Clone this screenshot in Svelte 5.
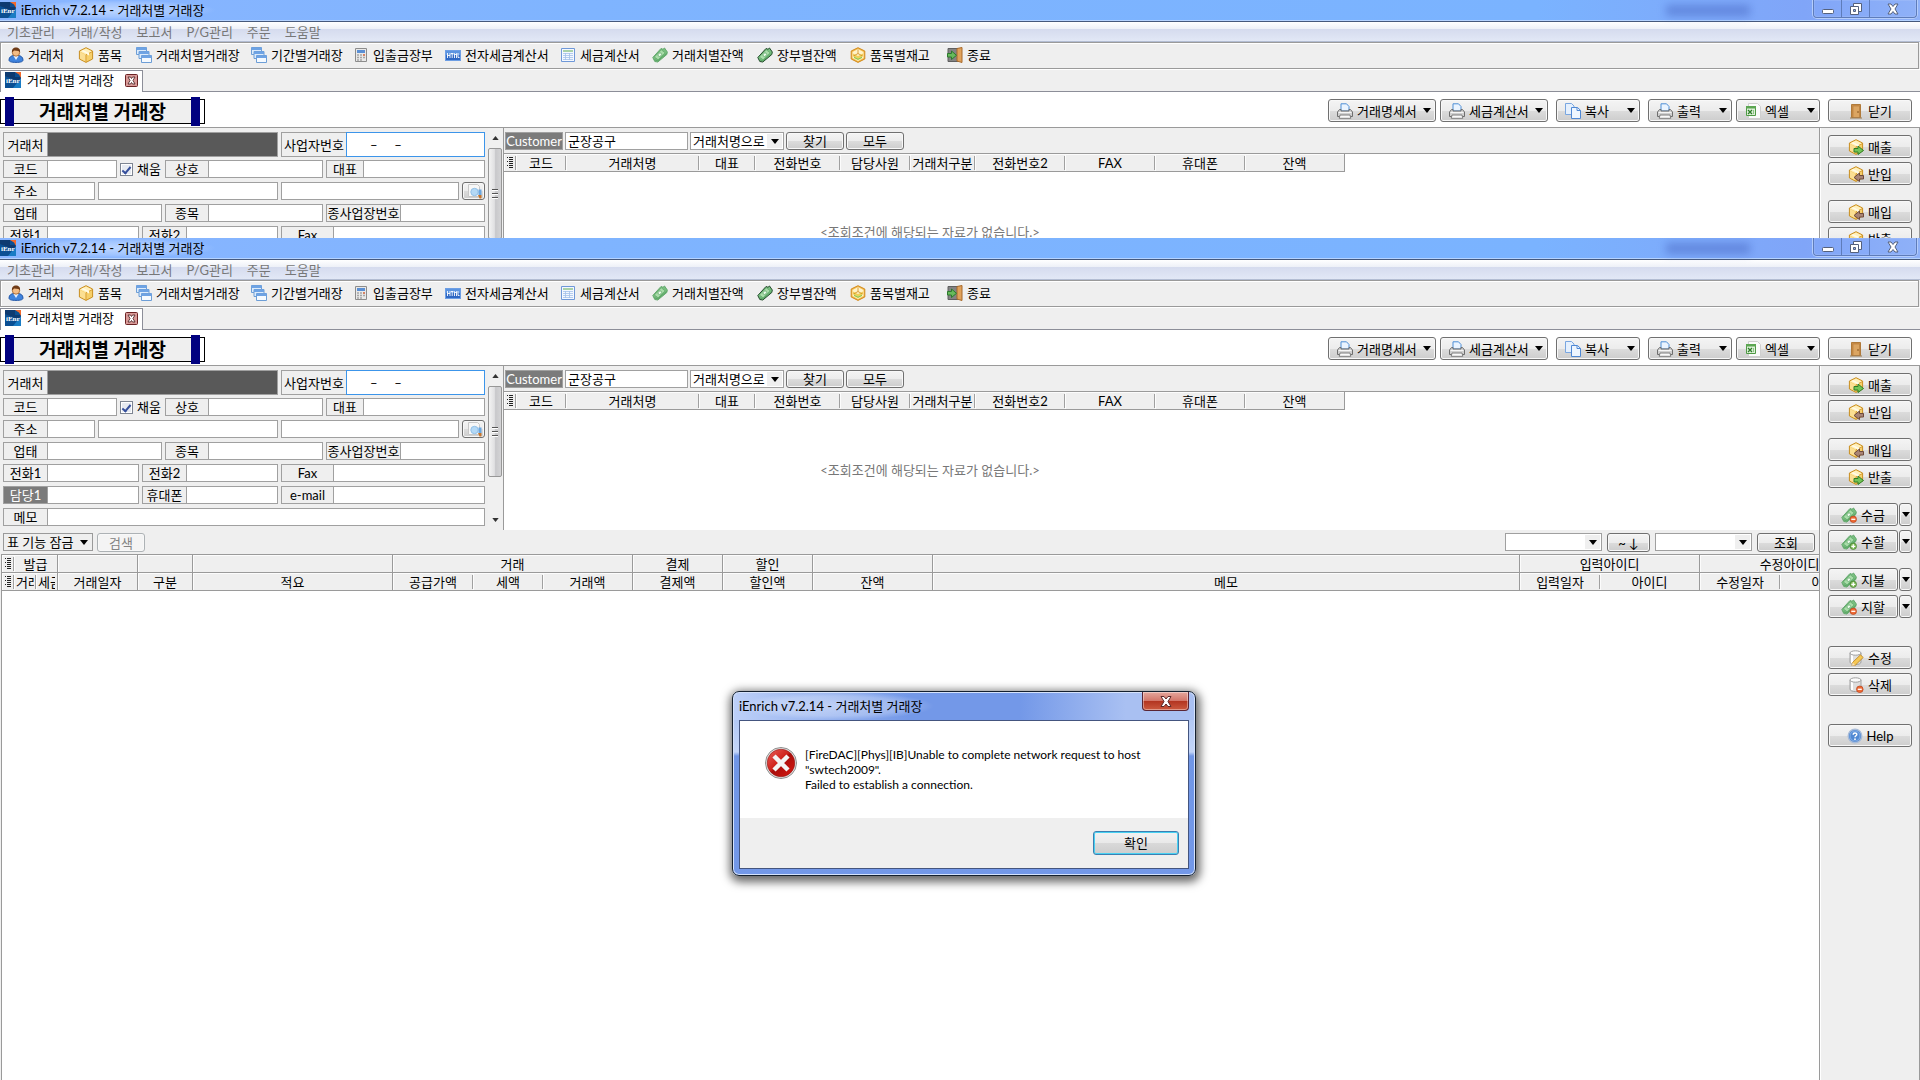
<script>
  const appTitle = 'iEnrich v7.2.14 - 거래처별 거래장';
  const menus = ['기초관리', '거래/작성', '보고서', 'P/G관리', '주문', '도움말'];

  const tools = [
    { icon: 'user', text: '거래처', width: 70 },
    { icon: 'box', text: '품목', width: 58 },
    { icon: 'windows', text: '거래처별거래장', width: 115 },
    { icon: 'windows', text: '기간별거래장', width: 102 },
    { icon: 'calc', text: '입출금장부', width: 92 },
    { icon: 'html', text: '전자세금계산서', width: 115 },
    { icon: 'sheet', text: '세금계산서', width: 92 },
    { icon: 'money', text: '거래처별잔액', width: 105 },
    { icon: 'moneyDark', text: '장부별잔액', width: 93 },
    { icon: 'stock', text: '품목별재고', width: 97 },
    { icon: 'exit', text: '종료', width: 60 }
  ];

  const actionGroups = [
    [
      { icon: 'printer', text: '거래명세서', wide: true },
      { icon: 'printer', text: '세금계산서', wide: true }
    ],
    [{ icon: 'copy', text: '복사' }],
    [
      { icon: 'printer', text: '출력' },
      { icon: 'excel', text: '엑셀' }
    ]
  ];

  // label = width of the caption cell, width = whole field
  const formRows = [
    [
      { text: '주소', label: 44, width: 92 },
      { name: '주소 1', width: 180 },
      { name: '주소 2', width: 178 },
      { search: true }
    ],
    [
      { text: '업태', label: 44, width: 159 },
      { text: '종목', label: 43, width: 158 },
      { text: '종사업장번호', label: 74 }
    ],
    [
      { text: '전화1', label: 44, width: 136 },
      { text: '전화2', label: 44, width: 136 },
      { text: 'Fax', label: 52 }
    ],
    [
      { text: '담당1', label: 44, width: 136, dark: true },
      { text: '휴대폰', label: 44, width: 136 },
      { text: 'e-mail', label: 52 }
    ],
    [{ text: '메모', label: 44 }]
  ];

  const customerCols = [
    ['코드', 50],
    ['거래처명', 133],
    ['대표', 56],
    ['전화번호', 85],
    ['담당사원', 70],
    ['거래처구분', 65],
    ['전화번호2', 90],
    ['FAX', 90],
    ['휴대폰', 90],
    ['잔액', 100]
  ];

  const ledgerGroups = [
    ['발급', 2],
    ['', 1],
    ['', 1],
    ['', 1],
    ['거래', 3],
    ['결제', 1],
    ['할인', 1],
    ['', 1],
    ['', 1],
    ['입력아이디', 2],
    ['수정아이디', 2]
  ];

  // third value: column ends a group
  const ledgerCols = [
    ['거래', 22, false],
    ['세금', 22, true],
    ['거래일자', 80, true],
    ['구분', 55, true],
    ['적요', 200, true],
    ['공급가액', 80, false],
    ['세액', 70, false],
    ['거래액', 90, true],
    ['결제액', 90, true],
    ['할인액', 90, true],
    ['잔액', 120, true],
    ['메모', 587, true],
    ['입력일자', 80, false],
    ['아이디', 100, true],
    ['수정일자', 80, false],
    ['아이디', 100, true]
  ];

  const sideGroups = [
    [
      { icon: 'boxOut', text: '매출' },
      { icon: 'boxIn', text: '반입' }
    ],
    [
      { icon: 'boxIn', text: '매입' },
      { icon: 'boxOut', text: '반출' }
    ],
    [
      { icon: 'moneyMinus', text: '수금', split: true },
      { icon: 'moneyPlus', text: '수할', split: true }
    ],
    [
      { icon: 'moneyPlus', text: '지불', split: true },
      { icon: 'moneyMinus', text: '지할', split: true }
    ]
  ];

  const editGroups = [
    [
      { icon: 'edit', text: '수정' },
      { icon: 'remove', text: '삭제' }
    ],
    [{ icon: 'help', text: 'Help' }]
  ];

  const sum = (cols) => cols.reduce((total, col) => total + col[1], 12);
</script>

{#snippet boxShape()}
  <path d="M8 .7 14.6 4v8L8 15.4 1.4 12V4z" fill="#f6cf6a" stroke="#c98f22" />
  <path d="M8 1.5 14 4.4 8 7.6 2 4.4z" fill="#fff0bd" />
  <path d="M2 5 7.7 8v6.6L2 11.6z" fill="#fbdf93" />
  <path d="M8 8v7M8 7.8l6-3" stroke="#d9a136" fill="none" />
  <path d="M5 3l6 3v2.4L9 7.6V6.8L3.6 4z" fill="#fffbe8" />
{/snippet}

{#snippet cashShape(line)}
  <path d="M.8 10.500 9 1.500l2 .8 1.500-1.300 2.800 4-.5 2.500-9 7.500-3-.5z" fill="#79bf80" stroke={line} />
  <path d="M2.300 10 9.300 2.800l3.800 3-7 7z" fill="#a9dca9" stroke="#5ba566" stroke-width=".7" />
  <ellipse cx="7.800" cy="7.700" rx="2" ry="1.600" transform="rotate(-45 7.800 7.700)" fill="#ecfaea" stroke="#5ba566" stroke-width=".7" />
  <path d="M2.500 12.800l3.300 1 8.700-7.300" fill="none" stroke="#4c9a58" stroke-width=".7" />
{/snippet}

{#snippet drumShape()}
  <path d="M2 3v9c0 1.600 2.300 2.600 5.500 2.600S13 13.600 13 12V3z" fill="#dedede" stroke="#a0a0a0" />
  <path d="M4 5v8" stroke="#fff" stroke-width="2" />
  <ellipse cx="7.500" cy="3" rx="5.500" ry="2.200" fill="#fbfbfb" stroke="#a0a0a0" />
{/snippet}

{#snippet icon(name)}
  <svg class="icon" viewBox="0 0 16 16" width="16" height="16" aria-hidden="true">
    {#if name === 'app'}
      <rect width="16" height="16" fill="#0b4f93" />
      <path d="M0 0h10v5h6v5L0 4z" fill="#0e3a70" />
      <path d="M16 6v10H8z" fill="#1a7cc4" />
      <path d="M10 0h6v6l-2-3.500z" fill="#f26a2c" />
      <text x="1" y="11" font-size="7" font-weight="700" font-family="Liberation Serif, serif" fill="#fff">iEnr</text>
    {:else if name === 'user'}
      <path d="M1 13c0-3 2.400-4.500 5-4.500h4c2.600 0 5 1.500 5 4.500 0 1.600-2 2.400-7 2.400S1 14.600 1 13z" fill="#3f83dd" stroke="#2458a8" />
      <path d="M5.500 9 8 13l2.500-4z" fill="#e8f1ff" />
      <circle cx="8" cy="5.500" r="3.700" fill="#f3bc85" stroke="#9b5e2c" stroke-width=".8" />
      <path d="M4 5.500C3.500 2 5.500.5 8 .5s4.600 1.400 4 5L10.600 4 6 3.600z" fill="#6f3b17" />
    {:else if name === 'box'}
      {@render boxShape()}
    {:else if name === 'boxOut'}
      {@render boxShape()}
      <path d="M6 9.500h4V7l5.500 4.500L10 15.500V13H6z" fill="#72c557" stroke="#2f7d24" />
    {:else if name === 'boxIn'}
      {@render boxShape()}
      <path d="M15.500 9.500h-4V7L6 11.500l5.500 4V13h4z" fill="#a98576" stroke="#6d4a3c" />
    {:else if name === 'windows'}
      <path d="M.5.500h10v7H.5z" fill="#dcebfb" stroke="#6d9ed6" />
      <path d="M.5.500h10v2.500H.5z" fill="#6ea3e4" />
      <path d="M3 4.500h10v7H3z" fill="#dcebfb" stroke="#6d9ed6" />
      <path d="M3 4.500h10V7H3z" fill="#6ea3e4" />
      <path d="M5.500 8.500h10v7h-10z" fill="#f5faff" stroke="#6d9ed6" />
      <path d="M5.500 8.500h10V11h-10z" fill="#6ea3e4" />
    {:else if name === 'calc'}
      <path d="M2.500 1.500h11v13h-11z" fill="#e9e9e9" stroke="#8c8c8c" />
      <path d="M4 3h8v3H4z" fill="#5b8fd4" />
      <path d="M4 8h2m1 0h2m1 0h2M4 10.500h2m1 0h2m1 0h2M4 13h2m1 0h2" stroke="#a5a5a5" stroke-width="1.400" />
      <path d="M10 8h2" stroke="#e0704a" stroke-width="1.400" />
    {:else if name === 'html'}
      <rect x=".5" y="3.500" width="15" height="10" fill="#2f68c4" stroke="#6d9ee4" />
      <path d="M1 4h14v4H1z" fill="#5c94e0" />
      <path d="M2.500 6v5M5 6v5M2.500 8.500H5M6 6.500h2.500M7.200 6.500V11M9.500 11V6.500l1 1.500 1-1.500V11M13 6v4.500h1.500" fill="none" stroke="#fff" stroke-width=".9" />
    {:else if name === 'sheet'}
      <path d="M1.500 1.500h13v13h-13z" fill="#f4f8ff" stroke="#6f98d8" />
      <path d="M3 3h10v2H3z" fill="#a9d1a8" />
      <path d="M3 6.500h10M3 8.500h10M3 10.500h10M3 12.500h10M5.500 6v7M9.500 6v7" stroke="#a3c0ea" stroke-width=".8" fill="none" />
    {:else if name === 'money'}
      {@render cashShape('#64a86d')}
    {:else if name === 'moneyDark'}
      {@render cashShape('#234a2b')}
    {:else if name === 'moneyMinus'}
      {@render cashShape('#64a86d')}
      <circle cx="12.300" cy="12.300" r="3.200" fill="#ee6a35" stroke="#b8401a" stroke-width=".7" />
      <path d="M10.300 12.300h4" stroke="#fff" stroke-width="1.300" />
    {:else if name === 'moneyPlus'}
      {@render cashShape('#64a86d')}
      <circle cx="12.300" cy="12.300" r="3.200" fill="#83bd5b" stroke="#3f7d2b" stroke-width=".7" />
      <path d="M10.300 12.300h4m-2-2v4" stroke="#fff" stroke-width="1.300" />
    {:else if name === 'stock'}
      <path d="M8 .7 14.800 4v8L8 15.400 1.200 12V4z" fill="#f3b94a" stroke="#d18a1c" />
      <path d="M8 2 13.500 5v6L8 14 2.500 11V5z" fill="#fff3c8" />
      <path d="M3 6.500 8 9l5-2.500V9l-5 2.500L3 9z" fill="#f0cf58" />
      <path d="M4 9.500l4 2 4-2v1.500l-4 2-4-2z" fill="#9ac84a" />
      <path d="M8 2.500v4L3.500 9M8 6.500 12.500 9" fill="none" stroke="#d18a1c" stroke-width=".8" />
    {:else if name === 'exit'}
      <path d="M1 1.500h10v13H1z" fill="#838383" stroke="#5f5f5f" />
      <path d="M10 1.500l5-1v15l-5-1.500z" fill="#e0a25b" stroke="#a8692a" />
      <path d="M.5 6.500h4V4l5 4.300-5 4.200V10h-4z" fill="#68ba5c" stroke="#2c7a2c" />
    {:else if name === 'door'}
      <path d="M3.500 1.500h9v13h-9z" fill="#c98d45" stroke="#b07a3a" />
      <path d="M5 3h6.500v11.500H5z" fill="#dba562" stroke="#b98040" stroke-width=".7" />
      <path d="M2 15h12" stroke="#9a7a50" />
      <circle cx="10" cy="9" r=".8" fill="#7a4b17" />
    {:else if name === 'printer'}
      <path d="M4 8V.8h5.500L12 3.500V8z" fill="#eaf4ff" stroke="#4f8fd6" />
      <path d="M2.500 6.500h1.500V8h8V6.500h1.500L15.500 9v4.500H.5V9z" fill="#d0d0d0" stroke="#6e6e6e" />
      <path d="M1.500 9.500h13" stroke="#f6f6f6" />
      <path d="M3 12h10l.8 3.300H2.200z" fill="#fafafa" stroke="#7c7c7c" />
    {:else if name === 'copy'}
      <path d="M.5.500h6L9 3v8.500H.5z" fill="#e5f0fd" stroke="#79a6e0" />
      <path d="M6.500 4.500h6l3 2.800v8.200h-9z" fill="#eef6ff" stroke="#4f88d4" />
      <path d="M12 4.500v3h3.500" fill="none" stroke="#4f88d4" />
    {:else if name === 'excel'}
      <path d="M3.500.5h9l3 3v12h-12z" fill="#fbfbfb" stroke="#cfcfcf" />
      <path d="M1.500 3.500h9v9h-9z" fill="#dff0da" stroke="#4f9a45" />
      <path d="M1 3h10v2.500H1z" fill="#5ca652" />
      <path d="M3 7l4 4M7 7l-4 4" stroke="#2d7d28" stroke-width="1.300" />
      <path d="M8.500 7v4" stroke="#8cc584" />
    {:else if name === 'edit'}
      {@render drumShape()}
      <path d="M4.500 12.500 12.500 4.800l2.700 2.700-8 7.800-3.200.5z" fill="#f6c854" stroke="#b98220" stroke-width=".8" />
      <path d="M4 15.800l.6-3.200 2.600 2.700z" fill="#f3dfc0" />
    {:else if name === 'remove'}
      {@render drumShape()}
      <circle cx="11.800" cy="12.300" r="3.300" fill="#ee6a35" stroke="#b8401a" stroke-width=".7" />
      <path d="M9.800 12.300h4" stroke="#fff" stroke-width="1.300" />
    {:else if name === 'help'}
      <circle cx="8" cy="8" r="6.800" fill="#5189d3" stroke="#a9bcd8" stroke-width="1.400" />
      <circle cx="8" cy="8" r="5" fill="none" stroke="#8fb6ea" stroke-width=".8" />
      <path d="M6.200 6.700C6.200 4.300 9.900 4.400 9.800 6.600 9.700 7.800 8 7.900 8 9.300" fill="none" stroke="#fff" stroke-width="1.400" />
      <circle cx="8" cy="11.200" r=".9" fill="#fff" />
    {:else if name === 'search'}
      <path d="M2.500 1.500h9l2 2v10h-11z" fill="#f7f7f7" stroke="#c8c8c8" />
      <circle cx="8.500" cy="9" r="3.700" fill="#b4d9f6" stroke="#93c1e8" />
      <path d="M12.500 6.500h3V12h-3z" fill="#6aa7e0" />
      <path d="M12 12h3.500v3.500H13.500z" fill="#c6752b" />
    {/if}
  </svg>
{/snippet}

{#snippet arrow()}
  <svg class="arrow" viewBox="0 0 8 5" width="8" height="5" aria-hidden="true"><path d="M0 0h8L4 5z" fill="#000" /></svg>
{/snippet}

{#snippet gridMark()}
  <svg class="mark" viewBox="0 0 6 11" width="6" height="11" aria-hidden="true">
    <path d="M0 .5h1m1 0h4M2 2.500h4M0 4.500h1m1 0h4M2 6.500h4M0 8.500h1m1 0h4M2 10.500h4" stroke="#222" shape-rendering="crispEdges" />
  </svg>
{/snippet}

{#snippet sideButton(item)}
  {#if item.split}
    <div class="split">
      <button class="btn">{@render icon(item.icon)}{item.text}</button>
      <button class="btn drop" aria-label="{item.text} 메뉴">{@render arrow()}</button>
    </div>
  {:else}
    <button class="btn">{@render icon(item.icon)}{item.text}</button>
  {/if}
{/snippet}

{#snippet appWindow()}
  <header class="caption">
    {@render icon('app')}
    <span class="caption-text">{appTitle}</span>
    <span class="ghost"></span>
    <div class="controls">
      <button aria-label="최소화">
        <svg width="12" height="12" viewBox="0 0 12 12"><rect x=".5" y="6.500" width="11" height="4" rx="1" fill="#fff" stroke="#55617c" /></svg>
      </button>
      <button aria-label="이전 크기로">
        <svg width="12" height="12" viewBox="0 0 12 12">
          <path d="M3.500.5h8v8h-8z" fill="#fff" stroke="#55617c" />
          <path d="M.5 3.500h8v8h-8z" fill="#fff" stroke="#55617c" />
          <path d="M3.500 6.500h2v2h-2z" fill="#8fb0ee" stroke="#55617c" />
        </svg>
      </button>
      <button class="close" aria-label="닫기">
        <svg width="12" height="12" viewBox="0 0 12 12"><path d="M1 1h3l2 2.500L8 1h3L8 6l3 5H8L6 8.500 4 11H1l3-5z" fill="#fff" stroke="#55617c" /></svg>
      </button>
    </div>
  </header>

  <nav class="menu">
    {#each menus as menu}
      <button>{menu}</button>
    {/each}
  </nav>

  <div class="toolbar">
    {#each tools as tool}
      <button style="width: {tool.width}px">{@render icon(tool.icon)}{tool.text}</button>
    {/each}
  </div>

  <div class="tabs">
    <div class="tab">
      {@render icon('app')}
      <span>거래처별 거래장</span>
      <button aria-label="탭 닫기">
        <svg width="13" height="13" viewBox="0 0 13 13">
          <rect x=".5" y=".5" width="12" height="12" rx="1" fill="#d99a98" stroke="#6b2223" />
          <path d="M3 3h2.500l1 1.500 1-1.500H10L8 6.500 10 10H7.500l-1-1.500-1 1.500H3l2-3.500z" fill="#fff" stroke="#53292a" stroke-width=".9" />
        </svg>
      </button>
    </div>
  </div>

  <div class="heading">
    <h1><span>거래처별 거래장</span></h1>
    <div class="actions">
      {#each actionGroups as group}
        <div class="pair">
          {#each group as item}
            <button class="btn menu-btn" class:wide={item.wide}>
              {@render icon(item.icon)}{item.text}{@render arrow()}
            </button>
          {/each}
        </div>
      {/each}
      <button class="btn">{@render icon('door')}닫기</button>
    </div>
  </div>

  <div class="body">
    <main>
      <div class="upper">
        <form class="form">
          <div class="row tall">
            <label class="field masked w275"><span class="w44">거래처</span><input /></label>
            <label class="field focus grow"><span class="w65">사업자번호</span><input value="–     –" /></label>
          </div>
          <div class="row">
            <label class="field w114"><span class="w44">코드</span><input /></label>
            <label class="check"><input type="checkbox" checked />채움</label>
            <label class="field w158"><span class="w43">상호</span><input /></label>
            <label class="field grow"><span class="w37">대표</span><input /></label>
          </div>
          {#each formRows as row}
            <div class="row">
              {#each row as field}
                {#if field.search}
                  <button type="button" class="btn find" aria-label="주소 검색">{@render icon('search')}</button>
                {:else if field.text}
                  <label class="field" class:grow={!field.width} class:dark={field.dark} style:width={field.width ? `${field.width}px` : null}>
                    <span style="width: {field.label}px">{field.text}</span><input />
                  </label>
                {:else}
                  <div class="field" style="width: {field.width}px"><input aria-label={field.name} /></div>
                {/if}
              {/each}
            </div>
          {/each}
        </form>

        <div class="scroll">
          <button aria-label="위로"><svg width="7" height="4" viewBox="0 0 8 5"><path d="M0 5h8L4 0z" fill="#333" /></svg></button>
          <div class="thumb"><i></i><i></i><i></i></div>
          <button aria-label="아래로"><svg width="7" height="4" viewBox="0 0 8 5"><path d="M0 0h8L4 5z" fill="#333" /></svg></button>
        </div>

        <section class="customers">
          <div class="search-bar">
            <label class="customer"><span>Customer</span><input value="군장공구" /></label>
            <div class="select wide-select">
              <select aria-label="검색 기준"><option>거래처명으로</option></select>
              {@render arrow()}
            </div>
            <button class="btn small">찾기</button>
            <button class="btn small">모두</button>
          </div>
          <div class="table-wrap">
            <table class="customer-table" style="width: {sum(customerCols)}px">
              <colgroup>
                <col style="width: 12px" />
                {#each customerCols as col}<col style="width: {col[1]}px" />{/each}
              </colgroup>
              <thead>
                <tr>
                  <th class="sep">{@render gridMark()}</th>
                  {#each customerCols as col}<th class="sep">{col[0]}</th>{/each}
                </tr>
              </thead>
            </table>
            <p class="empty">&lt;조회조건에 해당되는 자료가 없습니다.&gt;</p>
          </div>
        </section>
      </div>

      <div class="filter">
        <button class="lock">표 기능 잠금 {@render arrow()}</button>
        <button class="btn find-row" disabled>검색</button>
        <div class="range">
          <div class="select date"><select aria-label="시작일"><option></option></select>{@render arrow()}</div>
          <button class="btn swap">~ ↓</button>
          <div class="select date"><select aria-label="종료일"><option></option></select>{@render arrow()}</div>
          <button class="btn small">조회</button>
        </div>
      </div>

      <div class="ledger">
        <table style="width: {sum(ledgerCols)}px">
          <colgroup>
            <col style="width: 12px" />
            {#each ledgerCols as col}<col style="width: {col[1]}px" />{/each}
          </colgroup>
          <thead>
            <tr>
              <th class="sep">{@render gridMark()}</th>
              {#each ledgerGroups as group}<th class="end" colspan={group[1]}>{group[0]}</th>{/each}
            </tr>
            <tr>
              <th class="sep">{@render gridMark()}</th>
              {#each ledgerCols as col}
                <th class={col[2] ? 'end' : 'sep'}><span class:clip={col[1] < 30}>{col[0]}</span></th>
              {/each}
            </tr>
          </thead>
        </table>
      </div>
    </main>

    <aside>
      {#each sideGroups as group}
        <div class="group">
          {#each group as item}{@render sideButton(item)}{/each}
        </div>
      {/each}
      {#each editGroups as group}
        <div class="group apart">
          {#each group as item}{@render sideButton(item)}{/each}
        </div>
      {/each}
    </aside>
  </div>
{/snippet}

<div class="desktop">
  <div class="window back">{@render appWindow()}</div>
  <div class="window front">
    {@render appWindow()}

    <div class="dialog" role="alertdialog" aria-labelledby="dialog-title">
      <div class="dialog-caption">
        <span id="dialog-title">{appTitle}</span>
        <button aria-label="닫기">
          <svg width="12" height="11" viewBox="0 0 12 11"><path d="M1 .5h3L6 3 8 .5h3L8 5.500l3 5H8L6 8l-2 2.500H1l3-5z" fill="#fff" stroke="#5c2a2a" /></svg>
        </button>
      </div>
      <div class="dialog-body">
        <div class="message">
          <svg width="32" height="32" viewBox="0 0 32 32" aria-hidden="true">
            <defs>
              <linearGradient id="error-fill" x1="0" y1="0" x2="1" y2="1">
                <stop offset="0" stop-color="#e8615c" />
                <stop offset=".45" stop-color="#cf2019" />
                <stop offset=".5" stop-color="#a80d0b" />
                <stop offset="1" stop-color="#dc1a12" />
              </linearGradient>
            </defs>
            <circle cx="16" cy="16" r="15.500" fill="#e9e9e9" stroke="#8d8d8d" />
            <circle cx="16" cy="16" r="13.800" fill="url(#error-fill)" stroke="#8f1512" stroke-width=".6" />
            <path d="M9 9l14 14M23 9 9 23" stroke="#f4f4f4" stroke-width="4.500" />
          </svg>
          <p>[FireDAC][Phys][IB]Unable to complete network request to host<br />"swtech2009".<br />Failed to establish a connection.</p>
        </div>
        <div class="dialog-foot"><button>확인</button></div>
      </div>
    </div>
  </div>
</div>

<style>
  :global(body) {
    margin: 0;
    background: #fff;
  }

  .desktop {
    display: flex;
    flex-direction: column;
    height: 100vh;
    overflow: hidden;
    font: 13px/16px Lato, "Noto Sans CJK KR", sans-serif;
    color: #000;
  }

  .desktop :is(button, input, select) {
    font: inherit;
    color: inherit;
    box-sizing: border-box;
    margin: 0;
    padding: 0;
    border-radius: 0;
  }

  .desktop button {
    border: 0;
    background: none;
    white-space: nowrap;
  }

  .window {
    display: flex;
    flex-direction: column;
    position: relative;
    overflow: hidden;
    background: #efefef;
  }

  /* the front window covers the rest of this one */
  .back { flex: 0 0 238px; }
  .front { flex: 1; min-height: 0; }

  .caption, .menu, .toolbar, .tabs, .heading { flex-shrink: 0; }

  .icon, .arrow, .mark { flex: none; display: block; }

  .caption {
    display: flex;
    align-items: center;
    height: 20px;
    border-bottom: 1px solid #b5d3ff;
    background: linear-gradient(90deg, #89b5ff, #7fb4ff 30%, #7ab3ff 80%, #80a5f8 94%, #8fb1f8);
  }

  .caption-text {
    padding: 0 12px 0 5px;
    line-height: 20px;
    background: radial-gradient(closest-side, rgba(255, 255, 255, .45), rgba(255, 255, 255, .2) 70%, transparent);
  }

  .ghost {
    width: 84px;
    height: 11px;
    margin-left: auto;
    margin-right: 63px;
    background: #5375cf;
    opacity: .65;
    filter: blur(4px);
  }

  .controls {
    display: flex;
    align-self: flex-start;
    margin-right: 3px;
    height: 17px;
    border: 1px solid #5e7cba;
    border-top: 0;
    border-radius: 0 0 4px 4px;
    box-shadow: 0 0 0 1px #b5cdfb, inset 0 0 1px #fff;
  }

  .controls button {
    display: grid;
    place-items: center;
    width: 28px;
    border-right: 1px solid #5e7cba;
  }

  .controls .close { width: 46px; border-right: 0; }

  .menu {
    display: flex;
    gap: 14px;
    height: 19px;
    padding-left: 7px;
    border-top: 1px solid #46597c;
    border-bottom: 1px solid #b3bdd3;
    background: linear-gradient(#fff, #eef1f8 35%, #d5dbee 36%, #e2e8f6);
    color: #777;
  }

  .toolbar {
    box-sizing: border-box;
    display: flex;
    height: 27px;
    margin-right: 1px;
    padding: 0 0 1px 7px;
    border: 1px solid #9a9a9a;
    box-shadow: inset 1px 1px #fff;
  }

  .toolbar button {
    display: flex;
    align-items: center;
    gap: 4px;
  }

  .tabs {
    height: 21px;
    border-top: 1px solid #fff;
    border-bottom: 1px solid #8c8e98;
  }

  .tab {
    box-sizing: border-box;
    display: flex;
    align-items: center;
    width: 143px;
    height: 22px;
    padding: 0 4px 3px;
    border: 1px solid #8c8e98;
    border-bottom: 0;
    background: #fff;
  }

  .tab span { margin-left: 6px; }
  .tab button { margin-left: auto; }
  .tab svg { display: block; }

  .heading {
    display: flex;
    align-items: center;
    justify-content: space-between;
    height: 35px;
    padding-right: 8px;
    border-bottom: 1px solid #9a9a9a;
    background: #fff;
  }

  h1 {
    display: flex;
    box-sizing: border-box;
    width: 205px;
    height: 25px;
    margin: 3px 0 0;
    padding: 0 4px;
    border: 1px solid #000;
    font-size: 19px;
    font-weight: 600;
  }

  h1 span {
    box-sizing: border-box;
    flex: 1;
    height: 29px;
    margin-top: -3px;
    line-height: 30px;
    text-align: center;
    border: solid navy;
    border-width: 0 9px;
    background: linear-gradient(transparent 3px, #efefef 3px, #efefef 26px, transparent 26px) padding-box;
  }

  .actions { display: flex; gap: 8px; margin-top: 2px; }
  .pair { display: flex; gap: 4px; }

  .btn {
    display: flex;
    align-items: center;
    justify-content: center;
    gap: 4px;
    width: 84px;
    height: 23px;
  }

  .desktop .btn {
    border: 1px solid #707070;
    border-radius: 3px;
    background: linear-gradient(#f4f4f4, #ececec 50%, #dcdcdc 51%, #cdcdcd);
    box-shadow: inset 0 0 0 1px #f8f8f8;
  }

  .desktop .menu-btn { justify-content: flex-start; padding: 0 4px 0 8px; }
  .menu-btn.wide { width: 108px; }
  .menu-btn .arrow { margin-left: auto; }

  .body { display: flex; flex: 1 0 auto; }
  .front .body { flex: 1; min-height: 0; }

  main {
    flex: 1;
    min-width: 0;
    display: flex;
    flex-direction: column;
  }

  .upper { display: flex; }

  .form {
    flex: 0 0 482px;
    min-width: 0;
    display: flex;
    flex-direction: column;
    gap: 4px;
    padding: 4px 3px;
  }

  .row { display: flex; gap: 3px; height: 18px; }
  .tall { height: 25px; margin-bottom: -1px; }

  .field {
    box-sizing: border-box;
    flex: none;
    display: flex;
    border: 1px solid #a0a0a0;
    background: #fff;
  }

  .field span {
    box-sizing: border-box;
    flex: none;
    display: flex;
    align-items: center;
    justify-content: center;
    border-right: 1px solid #a0a0a0;
    background: #efefef;
    white-space: nowrap;
  }

  .field input {
    flex: 1;
    width: 0;
    min-width: 0;
    border: 0;
    background: transparent;
    outline: 0;
  }

  .grow { flex: 1; min-width: 0; }
  .w275 { width: 275px; }
  .w158 { width: 158px; }
  .w114 { width: 114px; }
  .field .w65 { width: 65px; }
  .field .w44 { width: 44px; }
  .field .w43 { width: 43px; }
  .field .w37 { width: 37px; }
  .desktop .masked input { background: #595959; }
  .desktop .focus input { margin: -1px; border: 1px solid #3c95ea; padding-left: 23px; }
  .dark span { background: #7b7b7b; color: #fff; }

  .check { display: flex; align-items: center; gap: 4px; width: 42px; }

  .desktop .check input {
    appearance: none;
    width: 13px;
    height: 13px;
    border: 1px solid #7d8592;
    background: #e6eaf1;
    box-shadow: inset 0 0 0 1px #fff;
    display: grid;
    place-items: center;
  }

  .check input:checked::after {
    content: "";
    width: 3px;
    height: 7px;
    border: solid #354f9c;
    border-width: 0 2px 2px 0;
    transform: rotate(40deg);
  }

  .desktop .find { width: 23px; height: 18px; }

  .scroll {
    flex: 0 0 15px;
    display: flex;
    flex-direction: column;
    background: #f0f0f0;
  }

  .scroll button { display: grid; place-items: center; width: 14px; height: 20px; }
  .scroll button:last-child { margin-top: auto; }

  .thumb {
    box-sizing: border-box;
    display: flex;
    flex-direction: column;
    align-items: center;
    justify-content: center;
    gap: 2px;
    width: 14px;
    height: 91px;
    border: 1px solid #979797;
    border-radius: 2px;
    background: linear-gradient(90deg, #f3f3f3, #e0e0e2 45%, #c8c8cb 55%, #d4d4d6);
  }

  .thumb i { width: 6px; height: 1px; border-bottom: 1px solid #fff; background: #555; }

  .customers {
    flex: 1;
    min-width: 0;
    display: flex;
    flex-direction: column;
    border-left: 1px solid #9a9a9a;
  }

  .search-bar {
    display: flex;
    gap: 2px;
    height: 18px;
    padding: 4px 0 3px 1px;
    border-bottom: 1px solid #9a9a9a;
  }

  .customer { display: flex; gap: 2px; }

  .customer span {
    box-sizing: border-box;
    width: 58px;
    background: #7b7b7b;
    border: 1px solid #a0a0a0;
    color: #fff;
    text-align: center;
  }

  .desktop .customer input {
    width: 123px;
    border: 1px solid #a0a0a0;
    padding-left: 2px;
  }

  .select { display: flex; position: relative; }

  .desktop .select select {
    appearance: none;
    width: 100%;
    border: 1px solid #a0a0a0;
    padding: 0 2px;
    background: linear-gradient(#efefef, #efefef) calc(100% - 1px) 1px / 15px calc(100% - 2px) no-repeat #fff;
  }

  .select .arrow { position: absolute; right: 5px; top: 7px; pointer-events: none; }
  .wide-select { width: 94px; }
  .desktop .small { width: 58px; height: 18px; }

  .table-wrap {
    flex: 1;
    overflow: hidden;
    background: #fff;
    display: flex;
    flex-direction: column;
  }

  table { table-layout: fixed; border-collapse: separate; border-spacing: 0; flex: none; }

  th {
    height: 17px;
    padding: 0;
    line-height: 16px;
    font-weight: 400;
    white-space: nowrap;
    overflow: hidden;
    border-bottom: 1px solid #9a9a9a;
    background: #efefef;
    box-shadow: inset 1px 1px #fcfcfc;
  }

  .mark { margin: 0 auto; }
  .sep { background: linear-gradient(#a0a0a0, #a0a0a0) right center / 1px 14px no-repeat #efefef; }
  .end { border-right: 1px solid #9a9a9a; }
  .clip { display: block; margin: 0 2px; overflow: hidden; text-align: left; }
  .customer-table th:last-child { border-right: 1px solid #9a9a9a; background: #efefef; }

  .empty {
    width: 852px;
    margin: auto 0;
    text-align: center;
    color: #777;
  }

  .filter {
    display: flex;
    align-items: flex-start;
    gap: 4px;
    height: 21px;
    padding: 3px 4px 0 3px;
  }

  .desktop .lock {
    display: flex;
    align-items: center;
    justify-content: space-between;
    width: 90px;
    height: 18px;
    padding: 0 4px 0 3px;
    border: 1px solid #9a9a9a;
  }

  .desktop .find-row {
    width: 48px;
    height: 19px;
    border-color: #adb2b5;
    background: #f4f4f4;
    color: #838383;
  }

  .range { display: flex; gap: 5px; margin-left: auto; }
  .range .select { width: 97px; height: 18px; }
  .range .select select { height: 18px; }
  .desktop .swap { width: 43px; height: 19px; }
  .desktop .range .small { height: 19px; }

  .ledger {
    flex: 1;
    overflow: hidden;
    margin-left: 1px;
    border-top: 1px solid #9a9a9a;
    border-left: 1px solid #9a9a9a;
    background: #fff;
  }

  aside {
    box-sizing: border-box;
    flex: 0 0 101px;
    display: flex;
    flex-direction: column;
    gap: 15px;
    padding: 7px 7px 0 8px;
    border-left: 1px solid #9a9a9a;
    border-right: 1px solid #9a9a9a;
    box-shadow: inset 1px 0 #fff;
  }

  .group { display: flex; flex-direction: column; gap: 4px; }
  .apart { margin-top: 13px; }
  .split { display: flex; gap: 1px; }
  .split .btn { width: 70px; }
  .desktop .split .drop { width: 13px; }

  .dialog {
    position: absolute;
    top: 453px;
    left: calc(50% - 228px);
    box-sizing: border-box;
    width: 464px;
    padding: 0 6px 6px;
    border: 1px solid #14202f;
    border-radius: 7px;
    background: linear-gradient(90deg, #bdd0f8, #7398e8 38%, #7398e8 62%, #a9c0f2 85%, #a9c0f2) top / 100% 28px no-repeat, linear-gradient(#a6bff2, #c3d5f8 60px, #7096e6 64px, #7398e8);
    box-shadow: inset 0 0 0 1px #d5e2fb, 1px 3px 10px 3px rgba(0, 0, 0, .6);
  }

  .dialog-caption {
    display: flex;
    align-items: flex-start;
    justify-content: space-between;
    height: 28px;
  }

  .dialog-caption span {
    padding-right: 12px;
    line-height: 28px;
    background: radial-gradient(closest-side, rgba(255, 255, 255, .4), rgba(255, 255, 255, .25) 70%, transparent);
  }

  .desktop .dialog-caption button {
    display: grid;
    place-items: center;
    width: 47px;
    height: 19px;
    border: 1px solid #5a2534;
    border-top: 0;
    border-radius: 0 0 4px 4px;
    background: linear-gradient(#e5a79d, #d3776a 48%, #b23420 50%, #cc5a40);
    box-shadow: inset 0 0 0 1px rgba(255, 255, 255, .4);
  }

  .dialog-body { border: 1px solid #44557f; background: #fff; }

  .message {
    display: flex;
    gap: 8px;
    height: 71px;
    padding: 26px 25px 0;
  }

  .message svg { flex: none; }
  .message p { margin: 0; font-size: 12px; line-height: 15px; white-space: nowrap; }

  .dialog-foot {
    display: flex;
    justify-content: flex-end;
    padding: 13px 9px;
    background: #efefef;
  }

  .desktop .dialog-foot button {
    width: 86px;
    height: 24px;
    border: 1px solid #3c7fb1;
    border-radius: 3px;
    background: linear-gradient(#f2f2f2, #e9e9e9 50%, #d9d9d9 51%, #cdcdcd);
    box-shadow: inset 0 0 0 1px #48d1f2;
  }
</style>
